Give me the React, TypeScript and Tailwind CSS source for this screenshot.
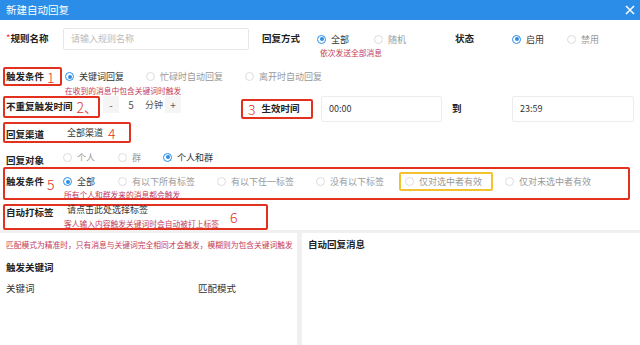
import React from "react";

function Radio({ label, checked = false, w = "" }: { label: string; checked?: boolean; w?: string }) {
  return (
    <div className={`flex items-center shrink-0 ${w}`}>
      <span
        className={`w-[9px] h-[9px] rounded-full border flex items-center justify-center shrink-0 ${
          checked ? "border-[#2b8de8]" : "border-[#dcdcdc]"
        }`}
      >
        {checked && <span className="w-[4px] h-[4px] rounded-full bg-[#2b8de8]" />}
      </span>
      <span className={`ml-[5px] text-[9px] leading-none whitespace-nowrap ${checked ? "text-[#333]" : "text-[#999]"}`}>
        {label}
      </span>
    </div>
  );
}

const Label = ({ children, className = "" }: { children: React.ReactNode; className?: string }) => (
  <span className={`font-bold text-[9.5px] leading-none text-[#222] whitespace-nowrap ${className}`}>{children}</span>
);

const Num = ({ children, className = "" }: { children: React.ReactNode; className?: string }) => (
  <span className={`text-[14px] leading-none text-[#e2311f] font-light ${className}`}>{children}</span>
);

const Hint = ({ children, className = "" }: { children: React.ReactNode; className?: string }) => (
  <div className={`text-[7.75px] leading-[8px] text-[#c43a58] whitespace-nowrap ${className}`}>{children}</div>
);

export default function App() {
  return (
    <div className="w-[640px] h-[345px] bg-white flex flex-col overflow-hidden text-[#333] font-['Noto_Sans_CJK_SC','Liberation_Sans',sans-serif]">
      {/* title bar */}
      <div className="h-[20px] bg-[#2b8de8] flex items-center justify-between pl-[6px] pr-[5px] shrink-0">
        <span className="text-white text-[10.5px] leading-none">新建自动回复</span>
        <svg width="10" height="10" viewBox="0 0 10 10" fill="none" stroke="white" strokeWidth="1.5">
          <path d="M1 1L9 9M9 1L1 9" />
        </svg>
      </div>

      {/* rule name */}
      <div className="flex items-start mt-[8px] h-[29px] shrink-0">
        <div className="w-[63px] h-[22px] flex items-center pl-[6px]">
          <Label>
            <span className="text-[#e33] font-normal">*</span>规则名称
          </Label>
        </div>
        <div className="w-[186px] h-[22px] border border-[#e6e6e6] rounded-[2px] flex items-center pl-[7px] text-[9px] text-[#bbb]">
          请输入规则名称
        </div>
        <div className="ml-[13px] w-[55px] h-[22px] flex items-center">
          <Label>回复方式</Label>
        </div>
        <div className="flex flex-col w-[138px]">
          <div className="h-[22px] flex items-center">
            <Radio label="全部" checked w="w-[57px]" />
            <Radio label="随机" />
          </div>
          <Hint className="ml-[3px] -mt-[1px]">依次发送全部消息</Hint>
        </div>
        <div className="w-[57px] h-[22px] flex items-center">
          <Label>状态</Label>
        </div>
        <div className="h-[22px] flex items-center">
          <Radio label="启用" checked w="w-[55px]" />
          <Radio label="禁用" />
        </div>
      </div>

      {/* trigger type */}
      <div className="flex items-start mt-[10px] shrink-0">
        <div className="ml-[3px] w-[59px] h-[19px] border-2 border-[#e2311f] rounded-[2px] flex items-center pl-[1px]">
          <Label>触发条件</Label>
          <Num className="ml-[3px]">1</Num>
        </div>
        <div className="ml-[3px] flex flex-col">
          <div className="h-[19px] flex items-center">
            <Radio label="关键词回复" checked w="w-[81px]" />
            <Radio label="忙碌时自动回复" w="w-[99px]" />
            <Radio label="离开时自动回复" />
          </div>
          <Hint className="mt-[1px]">在收到的消息中包含关键词时触发</Hint>
        </div>
      </div>

      {/* no-repeat time + effective time */}
      <div className="flex items-center mt-[1px] h-[26px] shrink-0">
        <div className="ml-[3px] w-[97px] h-[22px] self-start border-2 border-[#e2311f] rounded-[2px] flex items-center pl-[1px]">
          <Label>不重复触发时间</Label>
          <Num className="ml-[4px]">2、</Num>
        </div>
        <div className="ml-[3px] self-start h-[17px] flex items-center text-[#555]">
          <div className="w-[16px] h-[17px] bg-[#f5f5f5] flex items-center justify-center text-[10px] leading-none">-</div>
          <div className="w-[24px] text-center text-[10px] leading-none">5</div>
          <div className="w-[22px] text-center text-[9px] leading-none">分钟</div>
          <div className="w-[16px] h-[17px] bg-[#f5f5f5] flex items-center justify-center text-[10px] leading-none">+</div>
        </div>
        <div className="ml-[60px] w-[72px] h-[20px] border-2 border-[#e2311f] rounded-[2px] flex items-center pl-[5px]">
          <Num>3</Num>
          <Label className="ml-[6px]">生效时间</Label>
        </div>
        <div className="ml-[8px] w-[121px] h-[26px] border border-[#ececec] rounded-[2px] flex items-center pl-[7px] text-[9px]">
          00:00
        </div>
        <Label className="ml-[10px] w-[9px]">到</Label>
        <div className="ml-[51px] w-[122px] h-[26px] border border-[#ececec] rounded-[2px] flex items-center pl-[7px] text-[9px]">
          23:59
        </div>
      </div>

      {/* channel */}
      <div className="flex shrink-0">
        <div className="ml-[3px] w-[128px] h-[21px] border-2 border-[#e2311f] rounded-[2px] flex items-center pl-[1px]">
          <Label className="w-[61px] pt-[4px]">回复渠道</Label>
          <span className="text-[9px] leading-none text-[#333] -mt-[1px]">全部渠道</span>
          <Num className="ml-[5px]">4</Num>
        </div>
      </div>

      {/* target */}
      <div className="flex items-center mt-[7px] h-[14px] shrink-0">
        <div className="w-[63px] pl-[6px]">
          <Label>回复对象</Label>
        </div>
        <Radio label="个人" w="w-[55px]" />
        <Radio label="群" w="w-[45px]" />
        <Radio label="个人和群" checked />
      </div>

      {/* tag condition */}
      <div className="mt-[3px] ml-[3px] w-[627px] h-[33px] border-2 border-[#e2311f] rounded-[2px] flex shrink-0">
        <div className="w-[58px] pl-[1px] pt-[3px]">
          <div className="h-[19px] flex items-center">
            <Label>触发条件</Label>
            <Num className="ml-[3px] mt-[5px]">5</Num>
          </div>
        </div>
        <div className="flex flex-col pt-[3px]">
          <div className="h-[19px] flex items-center">
            <Radio label="全部" checked w="w-[55px]" />
            <Radio label="有以下所有标签" w="w-[99px]" />
            <Radio label="有以下任一标签" w="w-[99px]" />
            <Radio label="没有以下标签" w="w-[83px]" />
            <div className="w-[94px] h-[19px] border-2 border-[#f2c230] rounded-[2px] flex items-center pl-[4px]">
              <Radio label="仅对选中者有效" />
            </div>
            <div className="ml-[12px]">
              <Radio label="仅对未选中者有效" />
            </div>
          </div>
          <Hint className="ml-[1px]">所有个人和群发来的消息都会触发</Hint>
        </div>
      </div>

      {/* auto tag */}
      <div className="mt-[4px] ml-[3px] w-[265px] h-[26px] border-2 border-[#e2311f] rounded-[2px] flex shrink-0">
        <div className="w-[58px] pl-[1px] h-[14px] flex items-center">
          <Label>自动打标签</Label>
        </div>
        <div className="w-[160px] flex flex-col">
          <div className="pl-[4px] text-[9px] leading-[9px] text-[#333] -mt-[1px]">请点击此处选择标签</div>
          <Hint className="pl-[1px] mt-[6px]">客人输入内容触发关键词时会自动被打上标签</Hint>
        </div>
        <Num className="ml-[7px] self-center">6</Num>
      </div>

      {/* bottom panels */}
      <div className="flex-1 bg-[#f0f0f0] pt-[3px] flex gap-[5px] min-h-0">
        <div className="w-[297px] bg-white pt-[8px] pl-[6px]">
          <Hint>匹配模式为精准时，只有消息与关键词完全相同才会触发，模糊则为包含关键词触发</Hint>
          <Label className="block mt-[14px] leading-[10px]">触发关键词</Label>
          <div className="flex mt-[10px] text-[9.5px] leading-[10px] text-[#333]">
            <span className="w-[192px]">关键词</span>
            <span>匹配模式</span>
          </div>
        </div>
        <div className="flex-1 bg-white pt-[7px] pl-[6px]">
          <Label className="block leading-[10px]">自动回复消息</Label>
        </div>
      </div>
    </div>
  );
}
